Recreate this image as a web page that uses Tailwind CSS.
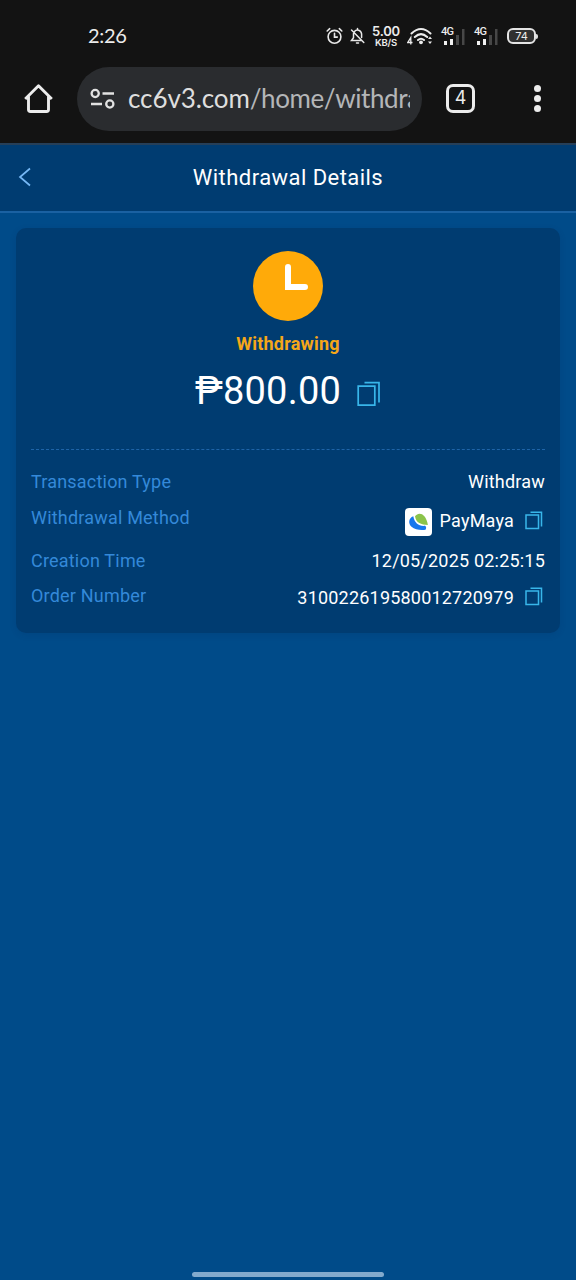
<!DOCTYPE html>
<html lang="en">
<head>
<meta charset="utf-8">
<title>Withdrawal Details</title>
<script src="https://cdn.jsdelivr.net/npm/@tailwindcss/browser@4"></script>
</head>
<body class="w-[576px] h-[1280px] overflow-hidden bg-[#004b89] font-['Roboto',sans-serif] text-white flex flex-col">
<svg class="hidden"><defs>
<symbol id="copy" viewBox="0 0 24 26"><path d="M1.2 5.2H17.8V24.2H1.2Z M7.5 1.7H22V21.5" fill="none" stroke="#38b6ea" stroke-width="1.7"/></symbol>
<symbol id="copy-small" viewBox="0 0 18 19"><path d="M1 4H13.500V17.500H1Z M5.500 1.200H16.500V15.500" fill="none" stroke="#38b6ea" stroke-width="1.500"/></symbol>
<symbol id="signal" viewBox="0 0 24 20"><path d="M3 15h3v4H3zM9 13h3v6H9z" fill="#f0f0f0"/><path d="M15 9h3v10h-3zM21 3h2.5v16H21z" fill="#474747"/></symbol>
</defs></svg>

<div class="h-[145px] shrink-0 bg-[#131313] border-b-2 border-[#263f58] flex flex-col">
  <div class="h-[67px] pt-[5px] flex items-center text-[#ececec]">
    <div class="ml-[88px] w-[238px] -mt-[2px] font-['Lato',sans-serif] text-[20px] leading-6 tracking-[-0.3px]">2:26</div>
    <svg class="w-[17px] h-[18px]" viewBox="0 0 17 18" fill="none" stroke="#e8e8e8" stroke-width="1.6" stroke-linecap="round"><circle cx="8.5" cy="9.8" r="6.4"/><path d="M8.5 6.3v3.8h2.8M1.2 4l2.5-2.3M15.800 4l-2.500-2.300"/></svg>
    <svg class="ml-[7px] w-[15px] h-[18px]" viewBox="0 0 15 18" fill="none" stroke="#e8e8e8" stroke-width="1.5" stroke-linecap="round"><path d="M4.500 4.500C6.300 2.200 11 2.500 11.600 6.800V10.500M3.500 6.500V10.800L1.500 13.500H11M1.500 3L13.800 15.500M7.500 1.500v1.200M6.500 16h2"/></svg>
    <div class="ml-[6px] w-[30px] flex flex-col items-center font-['Inter',sans-serif]"><span class="text-[13px] leading-[13px] tracking-[-0.2px] font-semibold">5.00</span><span class="text-[9.500px] leading-[9px] tracking-[-0.2px] font-semibold">KB/S</span></div>
    <svg class="ml-[6px] w-[27px] h-5" viewBox="0 0 27 20"><g fill="none" stroke="#ececec" stroke-width="2" stroke-linecap="round"><path d="M4.500 7.500Q14 -1.500 23.500 7.500M7.800 11Q14 5.300 20.200 11M11 14Q14 11.500 17 14"/></g><circle cx="14" cy="16.300" r="1.900" fill="#ececec"/><path d="M3.800 18.500V11.500L.8 16.500H5.500" fill="none" stroke="#ececec" stroke-width="1.300"/><path d="M21 13l2-2.500 2 2.500zM21 15.500l2 2.500 2-2.500z" fill="#ececec"/></svg>
    <div class="relative ml-[7px] w-6 h-5"><svg class="w-6 h-5"><use href="#signal"/></svg><span class="absolute left-0 top-0 font-['Roboto',sans-serif] font-medium text-[11px] leading-3 tracking-[-0.8px]">4G</span></div>
    <div class="relative ml-[9px] w-6 h-5"><svg class="w-6 h-5"><use href="#signal"/></svg><span class="absolute left-0 top-0 font-['Roboto',sans-serif] font-medium text-[11px] leading-3 tracking-[-0.8px]">4G</span></div>
    <div class="ml-[9px] w-[29px] h-[16px] rounded-[6px] border-2 border-[#e4e4e4] bg-[#303030] flex items-center justify-center font-['Inter',sans-serif] text-[11px] leading-none">74</div>
    <div class="w-[2px] h-[5px] bg-[#ddd] rounded-r"></div>
  </div>
  <div class="h-16 flex items-center">
    <svg class="ml-6 w-[29px] h-[32px]" viewBox="0 0 29 32" fill="none" stroke="#ececec" stroke-width="2.900" stroke-linejoin="round"><path d="M1.200 16L14.500 2.800 27.800 16M4.500 13V26.500Q4.500 28.500 6.500 28.500H22.500Q24.500 28.500 24.500 26.500V13"/></svg>
    <div class="ml-6 w-[345px] h-16 rounded-full bg-[#2a2c2f] flex items-center">
      <svg class="ml-[13px] w-[26px] h-[22px] shrink-0" viewBox="0 0 26 22" fill="none" stroke="#e2e2e2" stroke-width="2.300"><circle cx="5.200" cy="5.500" r="3.600"/><circle cx="19.800" cy="16" r="3.600"/><path d="M12.500 5.500H24M1 16H12"/></svg>
      <div class="ml-3 w-[282px] -mt-[2px] overflow-hidden whitespace-nowrap font-['Lato',sans-serif] font-normal text-[26px] leading-[34px] tracking-[-0.100px] text-[#dedede]">cc6v3.com<span class="tracking-[-0.400px] text-[#b4b6b8]">/home/withdrawal</span></div>
    </div>
    <div class="ml-6 w-[29px] h-[29px] -mt-[2px] rounded-[7px] border-3 border-[#ececec] flex items-center justify-center font-['Inter',sans-serif] text-[18px] leading-none text-[#ececec]">4</div>
    <div class="ml-[59px] -mt-[1px] flex flex-col gap-[3px]"><i class="size-[7px] rounded-full bg-[#ececec]"></i><i class="size-[7px] rounded-full bg-[#ececec]"></i><i class="size-[7px] rounded-full bg-[#ececec]"></i></div>
  </div>
</div>

<header class="h-[68px] shrink-0 bg-[#003c71] border-b-2 border-[#1a61a2] grid grid-cols-[50px_1fr_50px] items-center">
  <svg class="ml-[18px] -mt-[2px] w-[14px] h-5" viewBox="0 0 14 20" fill="none" stroke="#76b8f5" stroke-width="1.700"><path d="M12 1.500L2 10L12 18.500"/></svg>
  <h1 class="text-center text-[22px] leading-7 tracking-[0.450px]">Withdrawal Details</h1>
</header>

<main class="mx-4 mt-[15px] h-[405px] rounded-[10px] bg-[#003c71] px-[15px] flex flex-col shadow-[0_2px_6px_rgba(0,40,90,0.15)]">
  <section class="h-[222px] shrink-0 flex flex-col items-center pt-[23px] border-b border-dashed border-[#1e64a8]">
    <svg class="size-[70px] shrink-0" viewBox="0 0 70 70"><circle cx="35" cy="35" r="35" fill="#ffaa09"/><path d="M35 16V36H52" fill="none" stroke="#fff" stroke-width="6" stroke-linecap="round"/></svg>
    <div class="mt-[11px] text-[18px] leading-6 tracking-[0.200px] font-bold text-[#f5a718]">Withdrawing</div>
    <div class="mt-[12px] flex items-center"><span class="text-[38px] leading-[46px] tracking-[0.200px]">₱800.00</span><svg class="ml-4 mt-[6px] w-6 h-[26px]"><use href="#copy"/></svg></div>
  </section>
  <dl class="pt-5 text-[18px] leading-6 tracking-[0.200px]">
    <div class="h-9 flex justify-between"><dt class="text-[#3489d9]">Transaction Type</dt><dd>Withdraw</dd></div>
    <div class="h-[43px] flex justify-between"><dt class="text-[#3489d9]">Withdrawal Method</dt>
      <dd class="pt-[2px] flex items-start">
        <svg class="w-[27px] h-7" viewBox="0 0 27 28"><rect width="27" height="28" rx="4" fill="#fff"/><path d="M8.300 8.200C3.500 10 3 15.500 6.500 18.800C10 22 16 22.500 20.500 21.800Q22 19 20 17.800C14 18.500 9.500 15 8.300 8.200Z" fill="#1677ed"/><path d="M10 8.200C13.500 4 20.500 4.500 22.900 17C16 16.500 11 15 10 8.200Z" fill="#8bc34a"/></svg>
        <span class="ml-2 pt-[1px]">PayMaya</span><svg class="ml-[11px] mt-[3px] mr-[2px] w-[18px] h-[19px]"><use href="#copy-small"/></svg>
      </dd></div>
    <div class="h-[35px] flex justify-between"><dt class="text-[#3489d9]">Creation Time</dt><dd>12/05/2025 02:25:15</dd></div>
    <div class="h-9 flex justify-between"><dt class="text-[#3489d9]">Order Number</dt><dd class="flex"><span class="pt-[2px]">310022619580012720979</span><svg class="ml-[11px] mt-[3px] mr-[2px] w-[18px] h-[19px]"><use href="#copy-small"/></svg></dd></div>
  </dl>
</main>
<div class="mt-auto mb-[3px] mx-auto w-48 h-[5px] rounded-full bg-[#82aacd]"></div>
</body>
</html>
